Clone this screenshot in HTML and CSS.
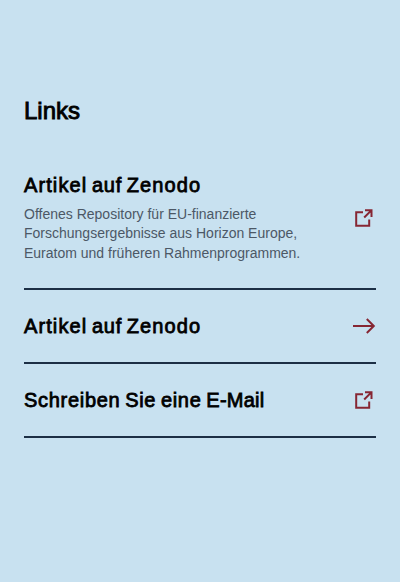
FILE: index.html
```html
<!DOCTYPE html>
<html lang="de">
<head>
<meta charset="utf-8">
<title>Links</title>
<link rel="stylesheet" href="styles.css">
</head>
<body>
<main class="links">
  <h2 class="links-title">Links</h2>
  <ul class="link-list">
    <li><a class="link-item" href="#">
      <span class="link-body">
        <span class="link-label"><span class="wider">Artikel</span> <span class="wide">auf</span> <span class="wider">Zenodo</span></span>
        <span class="link-text">Offenes Repository für EU-finanzierte Forschungsergebnisse aus Horizon Europe, Euratom und früheren Rahmenprogrammen.</span>
      </span>
      <svg class="icon" viewBox="0 0 24 24"><path d="M11 6.2H4.2V19.8H17.2V13.5M13 4.2H19.5V11M19.3 4.4L12.2 11.5"/></svg>
    </a></li>
    <li><a class="link-item" href="#">
      <span class="link-label"><span class="wider">Artikel</span> <span class="wide">auf</span> <span class="wider">Zenodo</span></span>
      <svg class="icon" viewBox="0 0 24 24"><path d="M1 12H22M14.8 5L21.8 12L14.8 19"/></svg>
    </a></li>
    <li><a class="link-item" href="#">
      <span class="link-label"><span class="wide">Schreiben</span> <span class="wide">Sie</span> <span class="wide">eine</span> <span class="snug">E-Mail</span></span>
      <svg class="icon" viewBox="0 0 24 24"><path d="M11 6.2H4.2V19.8H17.2V13.5M13 4.2H19.5V11M19.3 4.4L12.2 11.5"/></svg>
    </a></li>
  </ul>
</main>
</body>
</html>
```
FILE: styles.css
```css
body {
  margin: 0;
  min-height: 582px;
  background: #c8e1f0;
  color: #000;
  font-family: "Liberation Sans", Arial, sans-serif;
}
.links { padding: 97px 24px 96px; }
.links-title {
  margin: 0 0 32px;
  font-size: 24px;
  line-height: 28px;
  font-weight: 400;
  -webkit-text-stroke: 0.9px;
}
.link-list { list-style: none; margin: 0; padding: 0; }
.link-item {
  display: flex;
  align-items: center;
  justify-content: space-between;
  padding: 16px 0 24px;
  border-bottom: 2px solid #1c2f45;
  color: #000;
  text-decoration: none;
}
li + li .link-item { padding-top: 24px; }
.link-body { width: 296px; }
.link-label {
  display: block;
  font-size: 20px;
  line-height: 24px;
  word-spacing: -0.8px;
  -webkit-text-stroke: 0.8px;
}
.wider { letter-spacing: 1.1px; }
.wide { letter-spacing: 0.7px; }
.snug { letter-spacing: 0.25px; }
.link-text {
  display: block;
  margin: 7.7px 0 0.3px;
  font-size: 14px;
  line-height: 19.6px;
  color: #4c5866;
}
.icon {
  width: 24px;
  height: 24px;
  fill: none;
  stroke: #862633;
  stroke-width: 2;
}
```
